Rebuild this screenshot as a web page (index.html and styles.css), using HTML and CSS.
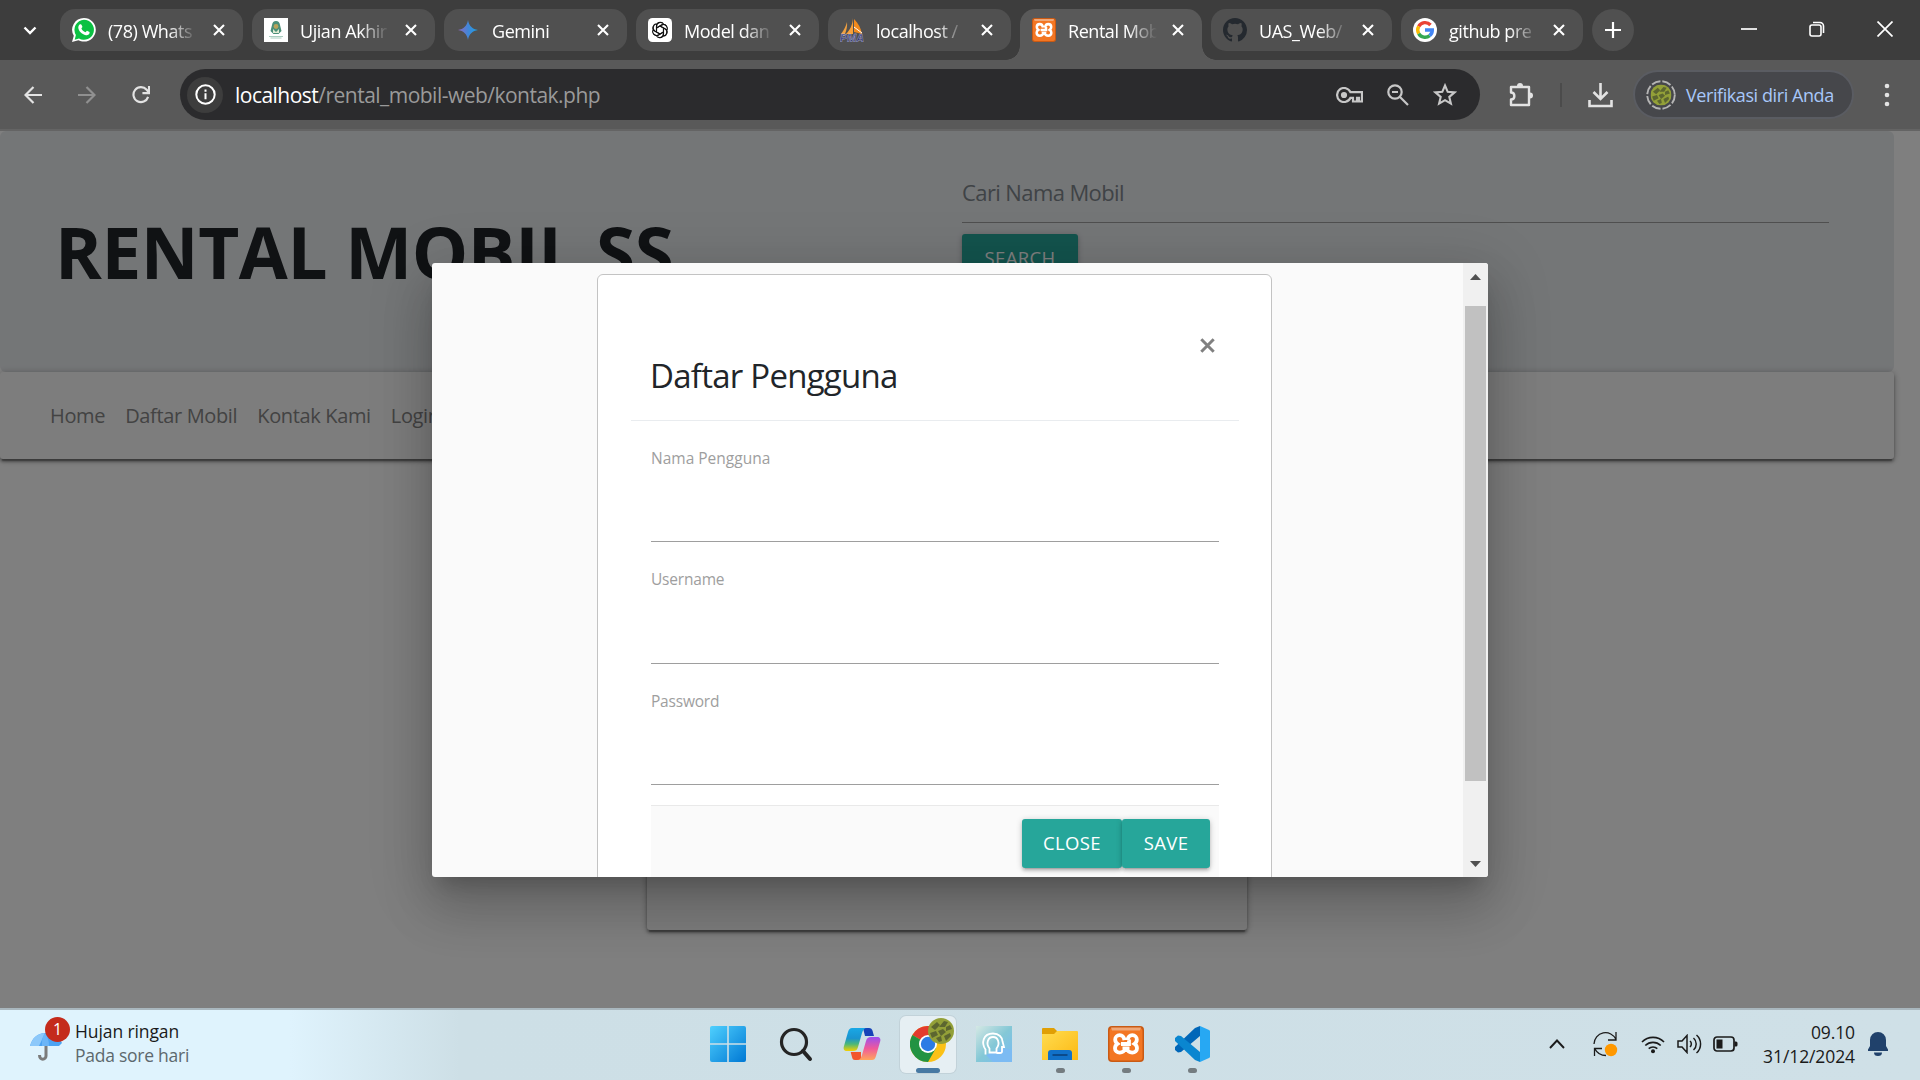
FILE: index.html
```html
<!DOCTYPE html>
<html lang="id">
<head>
<meta charset="utf-8">
<title>Rental Mobil SS</title>
<link rel="stylesheet" href="styles.css">
</head>
<body>
<svg class="defs" width="0" height="0" aria-hidden="true">
  <symbol id="x" viewBox="0 0 12 12"><path d="M1 1l10 10M11 1L1 11" stroke="#fff" stroke-width="2.1" fill="none"/></symbol>
  <symbol id="xampp" viewBox="0 0 36 36">
    <rect width="36" height="36" rx="4" fill="#c95a14"/><rect x="1.5" y="2" width="33" height="32.500" rx="3" fill="#f37623"/><path d="M3 1.500h30l-1 3H4z" fill="#f0a878"/>
    <path d="M16.500 14.200c-.6-3.200-2.400-5-4.800-5-2.700 0-4.500 2-4.500 4.300 0 2 .8 3.300 2.200 4.300-1.600 1-2.400 2.500-2.400 4.500 0 2.600 2 4.300 4.700 4.300 3 0 4.800-1.600 5.800-4.600M19.500 14.200c.6-3.200 2.400-5 4.800-5 2.700 0 4.500 2 4.500 4.300 0 2-.8 3.300-2.200 4.300 1.600 1 2.400 2.500 2.400 4.500 0 2.600-2 4.300-4.700 4.300-3 0-4.800-1.600-5.800-4.600M13 18h8v-4.500M14.500 22.500h7" fill="none" stroke="#fff" stroke-width="3.800"/>
  </symbol>
  <symbol id="camo" viewBox="0 0 26 26"><circle cx="13" cy="13" r="13" fill="#93a038"/><path d="M3 9l6-5 3 3-5 5zM11 9l5-6 4 1-3 5zM18 9l4-2 2 4-6 2zM2 15l6-2 2 4-6 3zM10 13l5-2 3 3-5 4zM8 20l5-2 1 5-3 1zM16 18l6-3 1 3-5 5z" fill="#5c6630"/></symbol>
</svg>

<header class="tabstrip">
  <button class="tab-search"><svg width="14" height="9" viewBox="0 0 14 9"><path d="M1.500 1.500L7 7l5.500-5.500" stroke="#fff" stroke-width="2.400" fill="none"/></svg></button>
  <div class="tabs">
    <div class="tab">
      <svg class="fav" viewBox="0 0 24 24"><path d="M12 0a11.800 11.800 0 0 1 0 23.600c-2 0-4-.5-5.600-1.400L0 24l1.800-6.200A11.800 11.800 0 0 1 12 0z" fill="#fff"/><path d="M12 1.800a10 10 0 1 1-5 18.700l-4.300 1.200L3.900 17A10 10 0 0 1 12 1.800z" fill="#0bc143"/><path d="M8 6.300c.6-.3 1.200-.2 1.500.4l.9 2.100c.1.400-.7 1.300-1 1.700.8 1.700 2.100 2.900 4 3.800.5-.3 1.200-1.500 1.600-1.500l2.500 1.200c.5 2.600-2 3.400-3.600 3.200-4.200-.6-7.500-4.300-7.600-7.600 0-1.400.8-2.800 1.700-3.300z" fill="#fff"/></svg>
      <span class="tab-title">(78) Whats</span><svg class="x"><use href="#x"/></svg>
    </div>
    <div class="tab">
      <svg class="fav" viewBox="0 0 24 24"><path d="M0 0h24v24H0z" fill="#fff"/><path d="M12 3c2.500 0 3.500 1.500 4 4l1.500 6-3 3h-5l-3-3L8 7c.5-2.500 1.500-4 4-4z" fill="#4a8f78"/><path d="M9 11l3 3 3-3v4H9z" fill="#dfe9d2"/><circle cx="12" cy="8.500" r="2.400" fill="#b8a35a"/><path d="M5 18.500h14M6.500 20h11" stroke="#a9cdbf"/></svg>
      <span class="tab-title">Ujian Akhir</span><svg class="x"><use href="#x"/></svg>
    </div>
    <div class="tab">
      <svg class="fav" viewBox="0 0 24 24"><defs><linearGradient id="gem"><stop stop-color="#9168c0"/><stop offset=".5" stop-color="#4286d8"/><stop offset="1" stop-color="#1ba1e3"/></linearGradient></defs><path d="M12 2c.8 5.600 4.400 9.300 10 10-5.600.8-9.200 4.400-10 10-.8-5.600-4.400-9.200-10-10 5.600-.7 9.200-4.400 10-10z" fill="url(#gem)"/></svg>
      <span class="tab-title">Gemini</span><svg class="x"><use href="#x"/></svg>
    </div>
    <div class="tab">
      <svg class="fav" viewBox="0 0 24 24"><rect width="24" height="24" rx="4.500" fill="#fff"/><g fill="none" stroke="#111" stroke-width="1.100"><path id="petal" d="M8.500 14V8.200a3.900 3.900 0 0 1 7.300-1.800M8.500 10l5-2.900a3.900 3.900 0 0 1 5 .9"/><use href="#petal" transform="rotate(60 12 12)"/><use href="#petal" transform="rotate(120 12 12)"/><use href="#petal" transform="rotate(180 12 12)"/><use href="#petal" transform="rotate(240 12 12)"/><use href="#petal" transform="rotate(300 12 12)"/></g></svg>
      <span class="tab-title">Model dan</span><svg class="x"><use href="#x"/></svg>
    </div>
    <div class="tab">
      <svg class="fav" viewBox="0 0 24 24"><path d="M7 4c.5 4-.5 8-2 12H1C4 12 6 8 7 4z" fill="#f0a040"/><path d="M13 0v16H6c4-4 6.500-9 7-16z" fill="#f9a13a"/><path d="M14 1c4 4 7 9 8 15l-8-2z" fill="#f28a1c"/><path d="M14 9l8 6" stroke="#fff" stroke-width="1"/><text class="pma" x="0" y="23.500" textLength="24" lengthAdjust="spacingAndGlyphs">PMA</text></svg>
      <span class="tab-title">localhost /</span><svg class="x"><use href="#x"/></svg>
    </div>
    <div class="tab active">
      <svg class="fav"><use href="#xampp"/></svg>
      <span class="tab-title">Rental Mob</span><svg class="x"><use href="#x"/></svg>
    </div>
    <div class="tab">
      <svg class="fav" viewBox="0 0 16 16"><path fill="#24292f" d="M8 0C3.580 0 0 3.580 0 8c0 3.540 2.290 6.530 5.470 7.590.4.070.55-.17.55-.38 0-.19-.01-.82-.01-1.490-2.010.37-2.530-.49-2.690-.94-.09-.23-.48-.94-.82-1.130-.28-.15-.68-.52-.01-.53.63-.01 1.080.58 1.230.82.72 1.210 1.870.87 2.330.66.070-.52.28-.87.51-1.070-1.780-.2-3.640-.89-3.640-3.950 0-.87.31-1.590.82-2.150-.08-.2-.36-1.020.08-2.120 0 0 .67-.21 2.200.82a7.600 7.600 0 0 1 4 0c1.530-1.040 2.200-.82 2.200-.82.44 1.100.16 1.920.08 2.120.51.56.82 1.270.82 2.150 0 3.070-1.870 3.750-3.650 3.950.29.25.54.73.54 1.480 0 1.070-.01 1.930-.01 2.200 0 .21.15.46.55.38A8.010 8.010 0 0 0 16 8c0-4.420-3.580-8-8-8z"/></svg>
      <span class="tab-title">UAS_Web/</span><svg class="x"><use href="#x"/></svg>
    </div>
    <div class="tab">
      <svg class="fav" viewBox="0 0 24 24"><circle cx="12" cy="12" r="12" fill="#fff"/><g fill="none" stroke-width="3.400"><path d="M17.500 7A7.300 7.300 0 0 0 5.700 8.400" stroke="#ea4335"/><path d="M5.700 8.400a7.300 7.300 0 0 0 0 7.200" stroke="#fbbc05"/><path d="M5.700 15.600a7.300 7.300 0 0 0 11 2" stroke="#34a853"/><path d="M16.700 17.600A7 7 0 0 0 19.300 12H12" stroke="#4285f4"/></g></svg>
      <span class="tab-title">github pre</span><svg class="x"><use href="#x"/></svg>
    </div>
  </div>
  <button class="new-tab"><svg width="16" height="16" viewBox="0 0 16 16"><path d="M8 0v16M0 8h16" stroke="#fff" stroke-width="2.200"/></svg></button>
  <div class="window-controls">
    <svg width="16" height="16" viewBox="0 0 16 16"><path d="M0 8h16" stroke="#fff" stroke-width="1.700"/></svg>
    <svg width="16" height="16" viewBox="0 0 16 16" fill="none" stroke="#fff" stroke-width="1.600"><rect x="1" y="4" width="11" height="11" rx="2"/><path d="M4 1.500h7a3.500 3.500 0 0 1 3.500 3.500v7"/></svg>
    <svg width="16" height="16" viewBox="0 0 16 16"><path d="M.5.500l15 15M15.500.500l-15 15" stroke="#fff" stroke-width="1.700"/></svg>
  </div>
</header>

<nav class="toolbar">
  <div class="nav-buttons">
    <svg width="18" height="18" viewBox="0 0 18 18" fill="none" stroke="#e3e3e3" stroke-width="2.200"><path d="M18 9H2M9.500 1L1.500 9l8 8"/></svg>
    <svg width="18" height="18" viewBox="0 0 18 18" fill="none" stroke="#909090" stroke-width="2.200"><path d="M0 9h16M8.500 1l8 8-8 8"/></svg>
    <svg width="18" height="18" viewBox="0 0 19 19" fill="none" stroke="#e3e3e3" stroke-width="2.300"><path d="M17 11.500A7.900 7.900 0 1 1 15.500 4l2 2.500"/><path d="M18 0v7.500h-7" /></svg>
  </div>
  <div class="omnibox">
    <span class="site-info"><svg width="21" height="21" viewBox="0 0 21 21"><circle cx="10.500" cy="10.500" r="9.200" fill="none" stroke="#fff" stroke-width="2"/><path d="M10.500 9.300v6M10.500 5.500v2.200" stroke="#fff" stroke-width="2"/></svg></span>
    <span class="url"><b>localhost</b>/rental_mobil-web/kontak.php</span>
    <span class="omni-icons">
      <svg width="27" height="16" viewBox="0 0 27 16" fill="none" stroke="#c7c7c7" stroke-width="2.200"><path d="M14.500 5.200A7 7 0 1 0 14.500 10.800H17V14.500h4v-3.700h2v3.700h3V5.200z"/><circle cx="8" cy="8" r="2" fill="#c7c7c7"/></svg>
      <svg width="22" height="22" viewBox="0 0 22 22" fill="none" stroke="#c7c7c7" stroke-width="2.200"><circle cx="8" cy="8" r="6.700"/><path d="M13 13l8 8M5 8h6"/></svg>
      <svg width="24" height="23" viewBox="0 0 24 23" fill="none" stroke="#c7c7c7" stroke-width="2.100"><path d="M12 2.500l2.700 6.300 6.800.6-5.200 4.500 1.600 6.700-5.900-3.500-5.900 3.500 1.600-6.700-5.200-4.500 6.800-.6z"/></svg>
    </span>
  </div>
  <svg class="ext" width="26" height="26" viewBox="0 0 26 26"><path d="M3 5h18v18H3v-5.500c4.500 0 4.500-7 0-7z" fill="none" stroke="#e3e3e3" stroke-width="2.400" stroke-linejoin="round"/><path d="M9 4a3 3 0 0 1 6 0zM22 10.500a3 3 0 0 1 0 6z" fill="#e3e3e3"/></svg>
  <i class="sep"></i>
  <svg class="download" width="25" height="26" viewBox="0 0 25 26" fill="none" stroke="#e3e3e3" stroke-width="2.600"><path d="M12.500 1v15M5.500 10l7 7 7-7M1.500 18v6h22v-6"/></svg>
  <div class="profile">
    <svg width="30" height="30" viewBox="0 0 30 30"><circle cx="15" cy="15" r="13.800" fill="none" stroke="#b5b5b5" stroke-width="1.900" stroke-dasharray="9 2"/><use href="#camo" x="4.500" y="4.500" width="21" height="21"/></svg>
    <span>Verifikasi diri Anda</span>
  </div>
  <svg class="menu" width="6" height="26" viewBox="0 0 6 26" fill="#e3e3e3"><circle cx="3" cy="4" r="2.300"/><circle cx="3" cy="13" r="2.300"/><circle cx="3" cy="22" r="2.300"/></svg>
</nav>

<main class="page">
  <section class="jumbotron">
    <h1>RENTAL MOBIL SS</h1>
    <form class="search">
      <div class="search-field">Cari Nama Mobil</div>
      <button class="btn" type="button">SEARCH</button>
    </form>
  </section>
  <nav class="site-nav">
    <a>Home</a><a>Daftar Mobil</a><a>Kontak Kami</a><a>Login</a>
  </nav>
  <section class="contact-card"></section>

  <div class="overlay">
    <div class="modal">
      <div class="modal-scroll">
        <div class="dialog">
          <div class="dialog-header">
            <svg class="close" width="15" height="15" viewBox="0 0 15 15"><path d="M1.300 1.300l12.400 12.400M13.700 1.300L1.300 13.700" stroke="#808080" stroke-width="3"/></svg>
            <h5>Daftar Pengguna</h5>
          </div>
          <form class="dialog-body">
            <label class="field name">Nama Pengguna</label>
            <label class="field user">Username</label>
            <label class="field pass">Password</label>
            <div class="dialog-footer">
              <button class="btn close-btn" type="button">CLOSE</button>
              <button class="btn save-btn" type="button">SAVE</button>
            </div>
          </form>
        </div>
      </div>
      <div class="scrollbar">
        <svg width="11" height="6" viewBox="0 0 11 6"><path d="M0 6L5.500 0 11 6z" fill="#505050"/></svg>
        <i class="thumb"></i>
        <svg width="11" height="6" viewBox="0 0 11 6"><path d="M0 0l5.500 6L11 0z" fill="#505050"/></svg>
      </div>
    </div>
  </div>
</main>

<footer class="taskbar">
  <div class="weather">
    <div class="weather-icon">
      <svg width="34" height="32" viewBox="0 0 34 32"><path d="M16 11v14a3.200 3.200 0 0 1-6.400 0v-1" fill="none" stroke="#7b7b7b" stroke-width="3"/><path d="M0 15C2 7 8 2 15 2s14 4 17 10l-3 3z" fill="#4ba3f3"/><path d="M0 15C2 7 8 2 15 2L9 15z" fill="#8cc8fa"/><path d="M15 2c-3 4-3 8-3 13h7c0-5-1-9-4-13z" fill="#6bb5f7"/></svg>
      <span class="badge">1</span>
    </div>
    <div class="weather-text"><span>Hujan ringan</span><small>Pada sore hari</small></div>
  </div>
  <div class="apps">
    <div class="app start"><svg width="36" height="36" viewBox="0 0 36 36"><defs><linearGradient id="win" x2="1" y2="1"><stop stop-color="#4fd0fe"/><stop offset="1" stop-color="#0078d4"/></linearGradient></defs><path d="M2 0h15.200v17.200H0V2a2 2 0 0 1 2-2zM18.800 0H34a2 2 0 0 1 2 2v15.200H18.800zM0 18.800h17.200V36H2a2 2 0 0 1-2-2zM18.800 18.800H36V34a2 2 0 0 1-2 2H18.800z" fill="url(#win)"/></svg></div>
    <div class="app"><svg width="34" height="36" viewBox="0 0 34 36" fill="none" stroke="#242424"><circle cx="15" cy="16" r="12.500" stroke-width="3.200"/><path d="M24 25l7 8" stroke-width="4" stroke-linecap="round"/></svg></div>
    <div class="app"><svg width="38" height="36" viewBox="0 0 38 36"><defs><linearGradient id="cpa" x2="0" y2="1"><stop stop-color="#19a8e6"/><stop offset=".45" stop-color="#1a94cf"/><stop offset=".7" stop-color="#4cb878"/><stop offset="1" stop-color="#f5d000"/></linearGradient><linearGradient id="cpb" x2="0" y2="1"><stop stop-color="#9b4ff0"/><stop offset=".5" stop-color="#f0599a"/><stop offset="1" stop-color="#ffa65c"/></linearGradient></defs><path d="M20 2h6c2 0 3 1 3.600 3l1.400 5h-9z" fill="#1743b8"/><path d="M18 34h-6c-2 0-2.500-1-3-3l-1.300-5H18z" fill="#f2552c"/><path d="M9 2h15c-3 0-4 2-5 5l-4 14c-1 3-2 4-5 4H4c-3 0-4-2-3-5L5 6c1-3 2-4 4-4z" fill="url(#cpa)"/><path d="M29 34H14c3 0 4-2 5-5l4-14c1-3 2-4 5-4h6c3 0 4 2 3 5l-4 14c-1 3-2 4-4 4z" fill="url(#cpb)"/></svg></div>
    <div class="app current"><svg width="36" height="36" viewBox="0 0 36 36"><circle cx="18" cy="18" r="18" fill="#fbc116"/><path d="M18 18L2.400 9A18 18 0 0 1 33.600 9z" fill="#e33b2e"/><path d="M2.400 9A18 18 0 0 0 18 36l8-14-8-4z" fill="#229342"/><circle cx="18" cy="18" r="9" fill="#fff"/><circle cx="18" cy="18" r="7.200" fill="#2c7be5"/></svg><svg class="avatar"><use href="#camo"/></svg></div>
    <div class="app"><svg width="36" height="36" viewBox="0 0 36 36"><defs><linearGradient id="hd" x2="1" y2="1"><stop stop-color="#d5e8e4"/><stop offset=".5" stop-color="#85c8d6"/><stop offset="1" stop-color="#74baf5"/></linearGradient></defs><path d="M0 0h36v36H0z" fill="url(#hd)"/><path d="M10 29l7 7h19V24l-9-2z" fill="#7cbbf3"/><g fill="none" stroke="#fff" stroke-width="1.800"><path d="M9.500 28.500v-5C5 17 7 7.500 17 7.500c6 0 9.500 4 9.500 8l1.500 5.500h-2v4.500c0 1-1 1.500-2 1.500h-3.500"/><path d="M13.500 26.500v-4c-4-5-1.500-11.500 3.500-11.500s7.500 6.500 3.500 11.500v4z"/></g></svg></div>
    <div class="app running"><svg width="36" height="36" viewBox="0 0 36 36"><defs><linearGradient id="fo" x2="1" y2="1"><stop stop-color="#ffdc50"/><stop offset="1" stop-color="#fcb913"/></linearGradient></defs><path d="M0 3a1 1 0 0 1 1-1h11l4 4h19v8H0z" fill="#e09f05"/><path d="M0 8h12l3-3h20a1 1 0 0 1 1 1v28H0z" fill="url(#fo)"/><path d="M6 34V27a3 3 0 0 1 3-3h18a3 3 0 0 1 3 3v7z" fill="#1171c9"/><path d="M10.500 29h15" stroke="#0b4a8b" stroke-width="2"/></svg></div>
    <div class="app running"><svg width="36" height="36"><use href="#xampp"/></svg></div>
    <div class="app running"><svg width="36" height="36" viewBox="0 0 36 36"><path d="M26 0l-5 2L1 21v3l3 2.500 3-.5L26 10z" fill="#0066b8"/><path d="M26 36l-5-2L1 15v-3l3-2.500 3 .5L26 26z" fill="#0a86d0"/><path d="M26 0l9 4a2 2 0 0 1 1 2v24a2 2 0 0 1-1 2l-9 4z" fill="#27a8f3"/></svg></div>
  </div>
  <div class="tray">
    <svg class="t-chev" width="16" height="10" viewBox="0 0 16 10"><path d="M1 9l7-7.500L15 9" fill="none" stroke="#1b1b1b" stroke-width="1.900"/></svg>
    <svg class="t-sync" width="25" height="26" viewBox="0 0 25 26" fill="none" stroke="#1b1b1b" stroke-width="1.300"><path d="M1 13A11.500 11.500 0 0 1 23 8.500M23 1v8h-8M1.500 25v-7.500H9M2 18c2 4 6 6.500 11 6.500"/><circle cx="18" cy="19" r="6.200" fill="#ff9800" stroke="none"/></svg>
    <svg class="t-wifi" width="24" height="20" viewBox="0 0 24 20" fill="none" stroke="#1b1b1b" stroke-width="1.600"><path d="M1 8a15.500 15.500 0 0 1 22 0M4.300 11.500a11 11 0 0 1 15.400 0M7.700 14.700a6.200 6.200 0 0 1 8.600 0"/><circle cx="12" cy="17.200" r="2" fill="#1b1b1b" stroke="none"/></svg>
    <svg class="t-vol" width="25" height="20" viewBox="0 0 25 20" fill="none" stroke="#1b1b1b" stroke-width="1.500"><path d="M1 7h4l5-5.500v17L5 13H1zM13 7a4 4 0 0 1 0 6M16.500 4a8 8 0 0 1 0 12M19.500 1a12 12 0 0 1 0 18"/></svg>
    <svg class="t-bat" width="25" height="16" viewBox="0 0 25 16"><rect x="1" y="1" width="20" height="14" rx="3" fill="none" stroke="#1b1b1b" stroke-width="1.700"/><path d="M3.500 3.500h6v9h-6zM21.500 5.500h1.500a1.500 1.500 0 0 1 1.500 1.500v2a1.500 1.500 0 0 1-1.500 1.500h-1.500z" fill="#1b1b1b"/></svg>
    <div class="clock"><span>09.10</span><span>31/12/2024</span></div>
    <svg class="t-bell" width="20" height="24" viewBox="0 0 20 24" fill="#20416b"><path d="M2 8a8 8 0 0 1 16 0v6l2 3.500V19H0v-1.500L2 14zM6 20.500h8a4 3.500 0 0 1-8 0z"/></svg>
  </div>
</footer>
</body>
</html>
```
FILE: styles.css
```css
* { box-sizing: border-box; }
body { margin: 0; width: 1920px; height: 1080px; display: flex; flex-direction: column; overflow: hidden; font-family: "Open Sans", "Noto Sans", sans-serif; background: #fff; }
button { border: 0; padding: 0; background: none; font: inherit; color: inherit; }
svg { display: block; flex: none; }
.defs { position: absolute; }

/* Browser tabs */
.tabstrip { height: 60px; background: #3d3d3d; display: flex; align-items: flex-start; padding: 9px 0 0; color: #fff; font-size: 18px; }
.tab-search { width: 60px; height: 42px; display: flex; justify-content: center; align-items: center; }
.tabs { display: flex; gap: 9px; }
.tab { width: 183px; height: 42px; border-radius: 15px; background: #505050; display: flex; align-items: center; padding: 0 18px 0 12px; }
.tab:nth-child(6), .tab:nth-child(8) { width: 182px; }
.tab:nth-child(7) { width: 181px; }
.fav { width: 24px; height: 24px; margin-right: 12px; }
.pma { font: italic bold 10px "Liberation Sans", sans-serif; fill: #33366e; stroke: #cfcfe8; stroke-width: .3px; }
.tab-title { width: 92px; margin-right: -8px; white-space: nowrap; letter-spacing: -.45px; mask-image: linear-gradient(90deg, #000 60px, transparent 89px); line-height: 24px; padding-top: 2px; }
.tab .x { width: 12px; height: 12px; margin-left: auto; }
.tab.active { position: relative; height: 51px; background: #595959; border-radius: 15px 15px 0 0; padding-bottom: 9px; }
.tab.active::before, .tab.active::after { content: ""; position: absolute; bottom: 0; width: 14px; height: 14px; }
.tab.active::before { left: -14px; background: radial-gradient(circle at 0 0, transparent 13.500px, #595959 14px); }
.tab.active::after { right: -14px; background: radial-gradient(circle at 100% 0, transparent 13.500px, #595959 14px); }
.new-tab { width: 42px; height: 42px; border-radius: 50%; background: #505050; display: flex; align-items: center; justify-content: center; margin-left: 9px; }
.window-controls { margin: 12px 27px 0 auto; display: flex; gap: 52px; }

/* Address bar */
.toolbar { height: 71px; background: #595959; border-bottom: 2px solid #646464; display: flex; align-items: center; padding-left: 24px; }
.nav-buttons { display: flex; gap: 36px; width: 156px; align-items: center; }
.omnibox { width: 1300px; height: 51px; border-radius: 26px; background: #2b2b2d; display: flex; align-items: center; padding: 0 23px 0 7px; }
.site-info { width: 36px; height: 36px; border-radius: 50%; background: #3d3d3d; display: flex; align-items: center; justify-content: center; }
.url { margin-left: 12px; font-size: 21px; letter-spacing: -.52px; color: #9a9a9a; white-space: nowrap; }
.url b { font-weight: 400; color: #fff; }
.omni-icons { margin-left: auto; display: flex; align-items: center; gap: 24px; }
.ext { margin-left: 28px; }
.sep { width: 2px; height: 24px; background: #4b4b4b; margin: 0 26px; }
.profile { margin-left: 22px; width: 219px; height: 49px; border-radius: 25px; border: 2px solid #5a5c62; background: #46474b; color: #a8c7fa; display: flex; align-items: center; padding-left: 11px; gap: 10px; font-size: 18px; letter-spacing: -.42px; white-space: nowrap; margin-left: 20px; width: 221px; }
.menu { margin-left: 30px; }

/* Web page */
.page { position: relative; height: 877px; background: #fff; overflow: hidden; }
.jumbotron { width: 1894px; height: 241px; border-radius: 6px; background: #e9ecef; display: flex; }
h1 { margin: 73px 0 0; padding-left: 55px; width: 962px; font-size: 71px; line-height: 96px; letter-spacing: -.4px; font-weight: 700; color: #212529; }
.search { width: 867px; padding-top: 31px; }
.search-field { height: 61px; border-bottom: 1px solid #9e9e9e; padding-top: 12px; line-height: 36px; font-size: 22px; letter-spacing: -.6px; color: #7f868c; }
.btn { display: block; height: 49px; border-radius: 3px; background: #26a69a; color: #fff; font-size: 18.500px; letter-spacing: .35px; line-height: 47px; padding-bottom: 2px; text-align: center; box-shadow: 0 3px 3px rgba(0,0,0,.14), 0 4px 1px -3px rgba(0,0,0,.12), 0 1px 6px rgba(0,0,0,.2); }
.search .btn { width: 116px; margin-top: 11px; }
.site-nav { width: 1894px; height: 87px; border-radius: 3px; background: #fafafa; display: flex; gap: 20px; padding-left: 50px; line-height: 88px; font-size: 20px; letter-spacing: -.35px; color: #868686; box-shadow: 0 3px 3px rgba(0,0,0,.28), 0 4px 1px -2px rgba(0,0,0,.24), 0 1px 7px rgba(0,0,0,.3); }
.contact-card { width: 600px; height: 420px; margin: 51px 0 0 647px; border-radius: 3px; background: #fafafa; box-shadow: 0 3px 3px rgba(0,0,0,.28), 0 4px 1px -2px rgba(0,0,0,.24), 0 1px 7px rgba(0,0,0,.3); }

/* Modal */
.overlay { position: absolute; inset: 0; background: rgba(0,0,0,.5); padding: 132px 0 0 432px; }
.modal { width: 1056px; height: 614px; border-radius: 3px; background: #fafafa; display: flex; overflow: hidden; box-shadow: 0 32px 50px 4px rgba(0,0,0,.14), 0 12px 60px 10px rgba(0,0,0,.12), 0 14px 20px -9px rgba(0,0,0,.2); }
.modal-scroll { width: 1031px; overflow: hidden; padding: 11px 0 0 165px; }
.dialog { width: 675px; height: 700px; background: #fff; border: 1px solid #c3c3c3; border-radius: 6px; padding: 33px 32px 0 33px; }
.dialog-header { height: 113px; border-bottom: 1px solid #e9ecef; padding: 30px 0 0 19px; display: flex; flex-direction: column; }
.close { align-self: flex-end; margin-right: 24px; }
h5 { margin: 0; font-size: 33px; font-weight: 400; line-height: 45px; letter-spacing: -.75px; color: #212529; }
.dialog-body { padding: 0 20px; }
.field { display: block; border-bottom: 1px solid #9e9e9e; padding-top: 26px; font-size: 15.500px; line-height: 22px; letter-spacing: -.2px; color: #9e9e9e; }
.name { height: 121px; letter-spacing: 0; }
.user { height: 122px; }
.pass { height: 121px; }
.dialog-footer { margin-top: 20px; height: 77px; background: #fafafa; border-top: 1px solid #e9e9e9; display: flex; justify-content: flex-end; padding: 13px 9px 0; }
.close-btn { width: 100px; }
.save-btn { width: 88px; }
.scrollbar { width: 25px; background: #f0f0f0; display: flex; flex-direction: column; align-items: center; padding: 11px 0 10px; }
.thumb { width: 21px; height: 475px; margin: 26px 0 auto; background: #c1c1c1; }

/* Taskbar */
.taskbar { height: 72px; border-top: 2px solid #a9b7be; background: linear-gradient(90deg, #dff3fd 0, #dff3fd 290px, #cddfe6 460px, #cfe0e7 1920px); display: flex; }
.weather { width: 700px; display: flex; padding-left: 30px; font-size: 17.500px; line-height: 24px; letter-spacing: -.1px; color: #1a1a1a; }
.weather-icon { position: relative; width: 45px; padding-top: 21px; }
.badge { position: absolute; left: 15px; top: 7px; width: 25px; height: 25px; border-radius: 50%; background: #c42b1c; color: #fff; text-align: center; font-size: 16px; line-height: 25px; }
.weather-text { display: flex; flex-direction: column; align-items: flex-start; padding-top: 9px; }
.weather-text small { font-size: inherit; letter-spacing: -.25px; color: #5d686d; }
.apps { display: flex; gap: 10px; padding-top: 6px; }
.app { position: relative; width: 56px; height: 57px; display: flex; align-items: center; justify-content: center; padding-bottom: 1px; border-radius: 6px; }
.start { margin-right: 2px; }
.current { background: #e6eff3; box-shadow: 0 0 0 1px #c2d2d9; }
.current::after, .running::after { content: ""; position: absolute; bottom: 0; left: 24px; width: 9px; height: 5px; border-radius: 3px; background: #747c80; }
.current::after { left: 16px; width: 24px; background: #4779a3; }
.avatar { position: absolute; right: 2px; top: 2px; width: 26px; height: 26px; }
.tray { margin-left: auto; display: flex; align-items: center; padding: 0 32px 2px 0; color: #1a1a1a; }
.t-sync { margin-left: 28px; }
.t-wifi { margin-left: 23px; }
.t-vol { margin-left: 12px; }
.t-bat { margin-left: 11px; }
.clock { width: 117px; display: flex; flex-direction: column; align-items: flex-end; font-size: 17.500px; line-height: 24px; letter-spacing: -.1px; padding-bottom: 1px; }
.t-bell { margin-left: 13px; }
```
